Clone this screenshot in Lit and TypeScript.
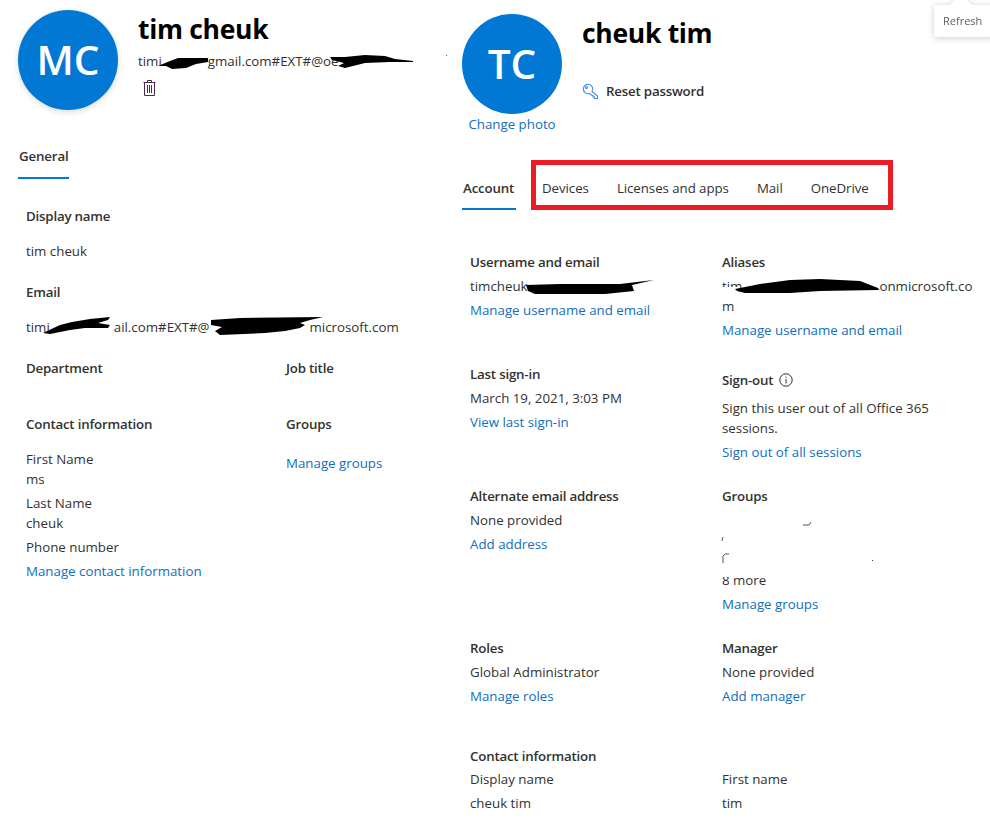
import { LitElement, html, css, svg } from "lit";
import { customElement } from "lit/decorators.js";

@customElement("app-root")
export class AppRoot extends LitElement {
  static styles = css`
    :host { display: block; position: relative; width: 990px; height: 829px; overflow: hidden; background: #fff;
      font-family: "Open Sans", "Noto Sans", sans-serif; font-size: 13.3px; line-height: 20px; color: #323130; }
    * { box-sizing: border-box; }
    .page { display: flex; height: 829px; overflow: hidden; }
    .left { width: 450px; flex: none; padding: 10px 0 0 18px; }
    .right { width: 528px; flex: none; padding: 14px 0 0 12px; }
    .head { display: flex; }
    .avatar { width: 100px; height: 100px; border-radius: 50%; background: #0078d4; color: #fff; display: flex; align-items: center; justify-content: center;
      font-size: 40.5px; font-weight: 600; box-shadow: 0 2px 6px rgba(0,0,0,.15); flex: none; }
    .avatar.tc { box-shadow: none; }
    .info { margin-left: 20px; min-width: 0; }
    h1 { margin: 0; font-size: 26.5px; line-height: 38px; font-weight: 700; color: #000; letter-spacing: -.3px; }
    .sub { white-space: nowrap; margin-top: 3px; }
    .trash { display: block; margin: 9px 0 0 5px; }
    a { text-decoration: none; display: block; color: #106ebe; }
    .tabs { display: flex; }
    .tab.on { font-weight: 600; letter-spacing: -.15px; border-bottom: 2px solid #0078d4; }
    .tabs-l { margin-top: 27px; }
    .tabs-l .tab { width: 51px; height: 42px; padding: 9px 0 0 1px; }
    .fields { padding: 27px 0 0 8px; }
    .h { font-weight: 600; letter-spacing: -.2px; }
    .f { margin-bottom: 21px; }
    .f .h { margin-bottom: 15px; }
    .two { display: grid; grid-template-columns: 260px 1fr; }
    .gap { margin-top: 4px; }
    .groups-link { margin-top: 19px; }
    .nf { margin: 0; }
    .rd { display: inline-block; }
    .rd-sub { width: 46px; }
    .rd-em1 { width: 64px; }
    .rd-em2 { width: 100px; }
    .rd-us { width: 130px; }
    .rd-al { width: 137px; }
    .chg { width: 100px; text-align: center; white-space: nowrap; }
    .cl { display: flex; flex-direction: column; flex: none; width: 100px; }
    .r-info { margin-left: 20px; }
    .reset { display: flex; align-items: center; gap: 7px; margin-top: 29px; font-weight: 600; letter-spacing: -.2px; }
    .tabs-r { margin-top: 26px; height: 50px; position: relative; align-items: flex-end; }
    .tabs-r .tab { height: 42px; padding-top: 10px; }
    .tabs-r .tab.on { width: 54px; padding-left: 1px; margin-right: 26px; }
    .tabs-r .t { margin-right: 28px; letter-spacing: -.06px; }
    .box { position: absolute; left: 69px; top: 0; width: 362px; height: 50px; border: 5px solid #ed1c24; pointer-events: none; }
    .grid { display: grid; grid-template-columns: 252px 248px; row-gap: 24px; padding: 42px 0 0 8px; }
    .grid p { margin: 4px 0 0; }
    .grid a { margin-top: 4px; }
    .grid p.tight { margin-top: 0; }
    .grid p.al { white-space: nowrap; }
    .so { display: flex; align-items: center; gap: 6px; margin-top: 6px; }
    .grid .so + p { margin-top: 8px; }
    .contact { grid-column: 1 / 3; margin-top: 16px; display: grid; grid-template-columns: 252px 248px; }
    .contact .h { grid-column: 1 / 3; margin-bottom: 3px; }
    .contact .v { margin-top: 4px; }
    .blank { height: 20px; }
    .tip { position: absolute; left: 934px; top: 5px; width: 60px; height: 32px; background: #fff; filter: drop-shadow(0 1px 3px rgba(0,0,0,.2)); font-size: 11px; line-height: 32px; padding-left: 9px; color: #605e5c; border-radius: 2px; }
    .tip::before { content: ""; position: absolute; left: 19px; top: -8px; width: 16px; height: 16px; background: #fff; transform: rotate(45deg); }
    .tip span { position: relative; }
    .ink { position: absolute; left: 0; top: 0; pointer-events: none; }
  `;

  private ink() {
    const black = [
      "M158 66 L170 61 L178 58 L208 58 L208 62 L196 64 L186 68 L172 69 L166 66 Z",
      "M330 57 L345 57 L365 55 L385 56 L395 59 L413 61 L413 62 L390 62 L365 63 L345 68 L338 66 L344 63 L332 60 Z",
      "M43 333 L60 325 L72 322 L90 319 L110 317 L108 320 L98 323 L110 325 L108 328 L85 328 L70 330 L50 334 Z",
      "M211 320 L240 318 L323 317 L310 320 L300 323 L305 325 L300 328 L285 331 L265 333 L220 335 L215 331 L222 327 L211 325 Z",
      "M526 285 L560 284 L620 284 L654 280 L632 285 L634 291 L605 294 L535 294 L528 291 Z",
      "M735 289 L760 284 L790 280 L820 279 L860 281 L878 288 L879 290 L820 291 L790 293 L745 293 L737 291 Z",
    ];
    const white = [
      "M722 287 H738 V294 H722 Z",
      "M721 573 H730 V577 H721 Z",
    ];
    const bits = [
      "M803 525 L809 525 L811 522",
      "M723 537 L722 541",
      "M723 563 L723 556 L725 554 L729 554",
    ];
    return html`<svg class="ink" width="990" height="829" viewBox="0 0 990 829">
      ${white.map((d) => svg`<path d=${d} fill="#fff"/>`)}
      ${black.map((d) => svg`<path d=${d} fill="#000"/>`)}
      ${bits.map((d) => svg`<path d=${d} fill="none" stroke="#555" stroke-width="1"/>`)}
      <rect x="872" y="560" width="1" height="1" fill="#444"/>
      <rect x="446" y="55" width="1" height="1" fill="#963"/>
    </svg>`;
  }

  render() {
    return html`
      <div class="page">
        <section class="left">
          <div class="head">
            <div class="avatar">MC</div>
            <div class="info">
              <h1>tim cheuk</h1>
              <div class="sub">timi<span class="rd rd-sub"></span>gmail.com#EXT#@oe</div>
              <svg class="trash" width="13" height="16" viewBox="0 0 13 16" fill="none" stroke="#4a2a4e" stroke-width="1">
                <path d="M.5 2.5h12M4.5 2.5V.5h4v2M1.5 2.5v13h10v-13M4.5 5v8M6.5 5v8M8.5 5v8"/>
              </svg>
            </div>
          </div>
          <div class="tabs tabs-l"><div class="tab on">General</div></div>
          <div class="fields">
            <div class="f"><div class="h">Display name</div><div>tim cheuk</div></div>
            <div class="f"><div class="h">Email</div><div>timi<span class="rd rd-em1"></span>ail.com#EXT#@<span class="rd rd-em2"></span>microsoft.com</div></div>
            <div class="two">
              <div class="f"><div class="h">Department</div></div>
              <div class="f"><div class="h">Job title</div></div>
            </div>
            <div class="two">
              <div>
                <div class="f nf"><div class="h">Contact information</div></div>
                <div class="gap15">First Name</div><div>ms</div>
                <div class="gap">Last Name</div><div>cheuk</div>
                <div class="gap">Phone number</div>
                <a class="gap" href="#">Manage contact information</a>
              </div>
              <div><div class="h">Groups</div><a class="groups-link" href="#">Manage groups</a></div>
            </div>
          </div>
        </section>
        <section class="right">
          <div class="head">
            <div class="cl"><div class="avatar tc">TC</div><a class="chg" href="#">Change photo</a></div>
            <div class="r-info">
              <h1>cheuk tim</h1>
              <div class="reset">
                <svg width="17" height="17" viewBox="0 0 17 17" fill="none" stroke="#3a8ee6" stroke-width="1.1">
                  <path d="M10 8.5 L15.5 13v2.5h-3v-1.5h-1.5v-1.5h-1L7.6 10.4A4.7 4.7 0 1 1 10 8.5Z"/><circle cx="4.5" cy="4.5" r="1"/>
                </svg>
                Reset password
              </div>
            </div>
          </div>
          <div class="tabs tabs-r">
            <div class="tab on">Account</div>
            <div class="tab t">Devices</div>
            <div class="tab t">Licenses and apps</div>
            <div class="tab t">Mail</div>
            <div class="tab t">OneDrive</div>
            <div class="box"></div>
          </div>
          <div class="grid">
            <div><div class="h">Username and email</div><p>timcheuk<span class="rd rd-us"></span></p><a href="#">Manage username and email</a></div>
            <div><div class="h">Aliases</div><p class="al">tim<span class="rd rd-al"></span>onmicrosoft.co<br />m</p><a href="#">Manage username and email</a></div>
            <div><div class="h">Last sign-in</div><p>March 19, 2021, 3:03 PM</p><a href="#">View last sign-in</a></div>
            <div>
              <div class="h so">Sign-out
                <svg width="14" height="14" viewBox="0 0 14 14" fill="none" stroke="#323130"><circle cx="7" cy="7" r="6.2"/><path d="M7 6v4.5M7 3.5v1.2"/></svg>
              </div>
              <p>Sign this user out of all Office 365 sessions.</p><a href="#">Sign out of all sessions</a>
            </div>
            <div><div class="h">Alternate email address</div><p>None provided</p><a href="#">Add address</a></div>
            <div><div class="h">Groups</div><p class="blank"></p><p class="blank tight"></p><p class="blank tight"></p><p class="tight">8 more</p><a href="#">Manage groups</a></div>
            <div><div class="h">Roles</div><p>Global Administrator</p><a href="#">Manage roles</a></div>
            <div><div class="h">Manager</div><p>None provided</p><a href="#">Add manager</a></div>
            <div class="contact">
              <div class="h">Contact information</div>
              <div>Display name<div class="v">cheuk tim</div></div>
              <div>First name<div class="v">tim</div></div>
            </div>
          </div>
        </section>
      </div>
      ${this.ink()}
      <div class="tip"><span>Refresh</span></div>
    `;
  }
}
